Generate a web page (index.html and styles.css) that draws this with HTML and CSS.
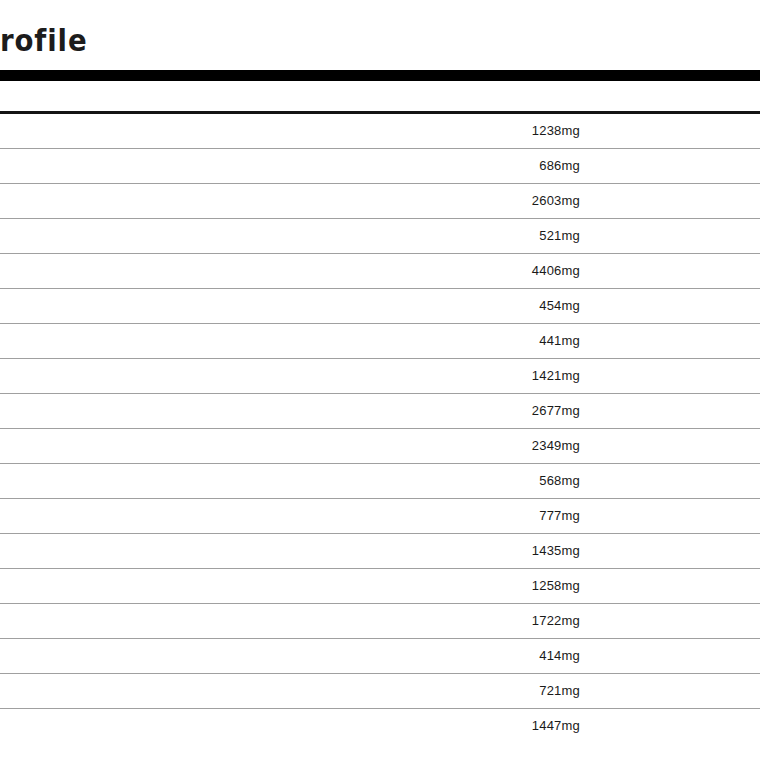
FILE: index.html
```html
<!DOCTYPE html>
<html>
<head>
<meta charset="utf-8">
<link rel="stylesheet" href="styles.css">
</head>
<body>
<div class="page">
  <h1 class="title">rofile</h1>
  <div class="bar"></div>
  <div class="head-row"></div>
  <div class="rows">
    <div class="row"><span class="name"></span><span class="val">1238mg</span></div>
    <div class="row"><span class="name"></span><span class="val">686mg</span></div>
    <div class="row"><span class="name"></span><span class="val">2603mg</span></div>
    <div class="row"><span class="name"></span><span class="val">521mg</span></div>
    <div class="row"><span class="name"></span><span class="val">4406mg</span></div>
    <div class="row"><span class="name"></span><span class="val">454mg</span></div>
    <div class="row"><span class="name"></span><span class="val">441mg</span></div>
    <div class="row"><span class="name"></span><span class="val">1421mg</span></div>
    <div class="row"><span class="name"></span><span class="val">2677mg</span></div>
    <div class="row"><span class="name"></span><span class="val">2349mg</span></div>
    <div class="row"><span class="name"></span><span class="val">568mg</span></div>
    <div class="row"><span class="name"></span><span class="val">777mg</span></div>
    <div class="row"><span class="name"></span><span class="val">1435mg</span></div>
    <div class="row"><span class="name"></span><span class="val">1258mg</span></div>
    <div class="row"><span class="name"></span><span class="val">1722mg</span></div>
    <div class="row"><span class="name"></span><span class="val">414mg</span></div>
    <div class="row"><span class="name"></span><span class="val">721mg</span></div>
    <div class="row last"><span class="name"></span><span class="val">1447mg</span></div>
  </div>
</div>
</body>
</html>
```
FILE: styles.css
```css
html, body {
  margin: 0;
  padding: 0;
  background: #fff;
}
.page {
  width: 760px;
  font-family: "Liberation Sans", Arial, sans-serif;
  color: #1a1a1a;
}
.title {
  margin: 0;
  padding-top: 20px;
  height: 50px;
  box-sizing: border-box;
  font-family: "DejaVu Sans", sans-serif;
  font-weight: bold;
  font-size: 31px;
  line-height: 40px;
  letter-spacing: 1px;
  color: #1c1c1c;
  transform: scaleX(0.89);
  transform-origin: left center;
}
.bar {
  margin-top: 20px;
  height: 11px;
  background: #000;
}
.head-row {
  height: 30px;
  border-bottom: 3px solid #141414;
}
.row {
  display: grid;
  grid-template-columns: 1fr auto 181px;
  height: 34px;
  border-bottom: 1px solid #a0a0a0;
  align-items: center;
}
.row.last {
  border-bottom: none;
}
.val {
  font-size: 13px;
  letter-spacing: 0.2px;
  text-align: right;
  margin-right: -1px;
  padding-bottom: 2px;
}
```
